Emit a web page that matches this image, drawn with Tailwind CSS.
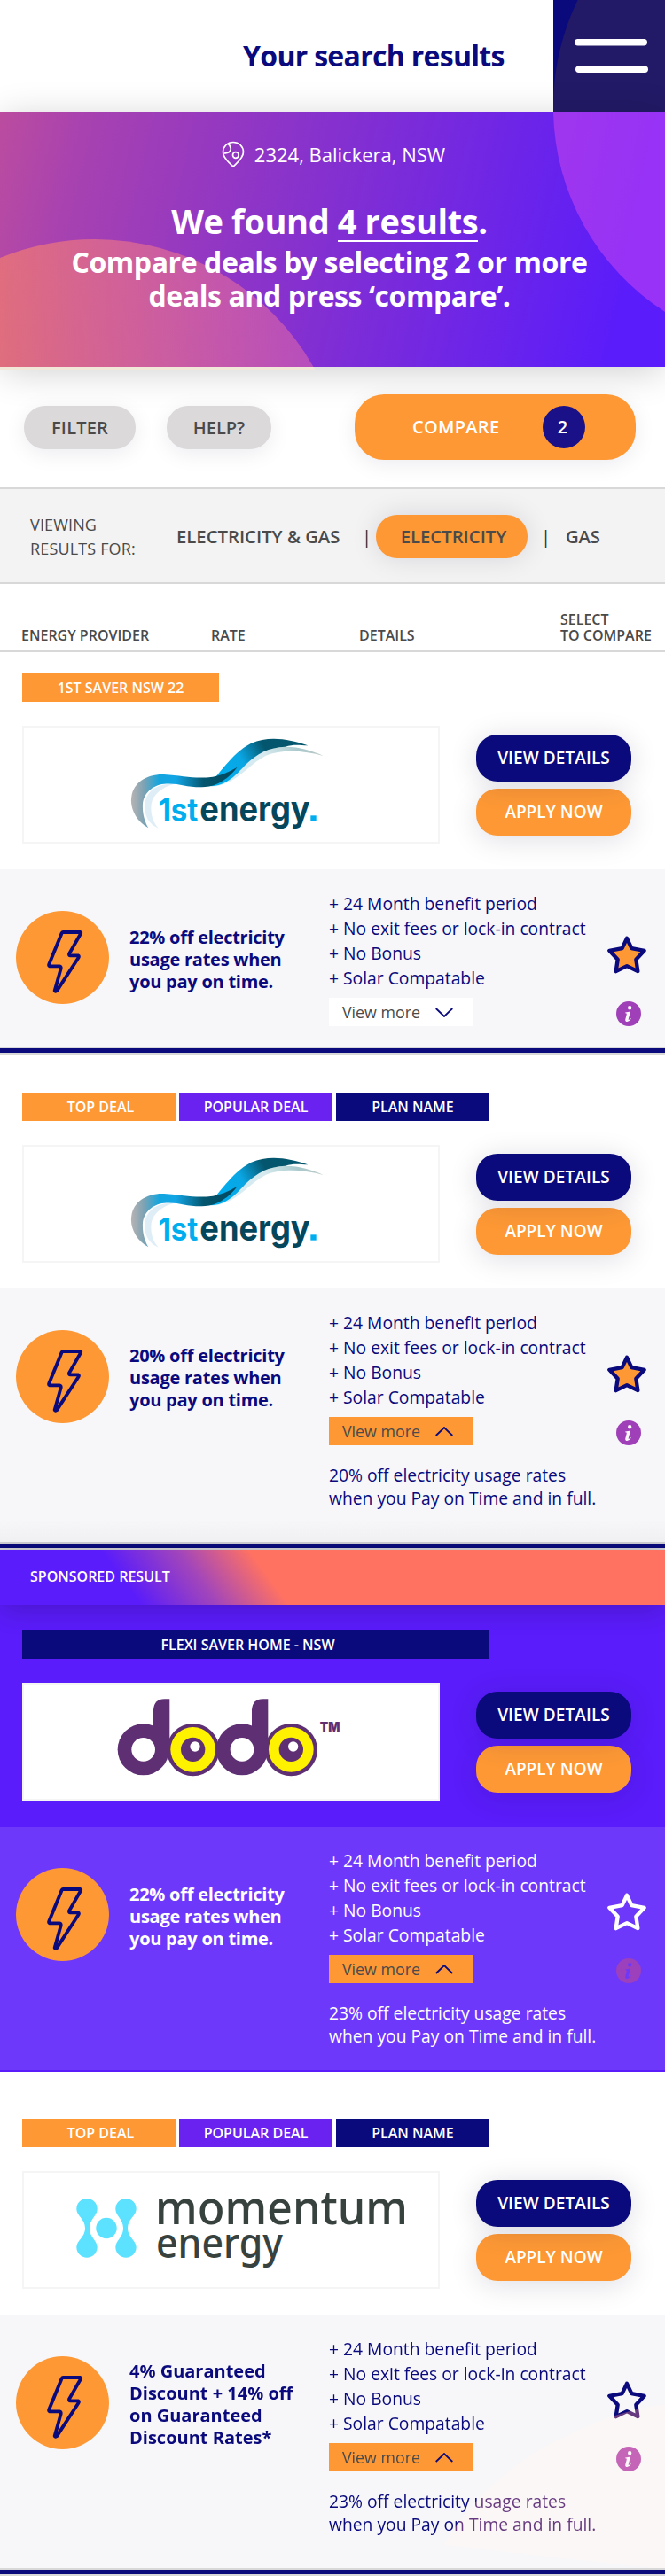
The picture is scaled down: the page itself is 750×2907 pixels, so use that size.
<!DOCTYPE html>
<html lang="en">
<head>
<meta charset="utf-8">
<title>Your search results</title>
<script src="https://cdn.jsdelivr.net/npm/@tailwindcss/browser@4"></script>
</head>
<body class="bg-white">
<svg class="absolute" width="0" height="0">
  <defs>
    <linearGradient id="swA" gradientUnits="userSpaceOnUse" x1="52" y1="0" x2="415" y2="0">
      <stop offset="0" stop-color="#b9b4b4"/><stop offset=".12" stop-color="#7fa3b3"/><stop offset=".27" stop-color="#12a5df"/><stop offset=".42" stop-color="#12a5e6"/><stop offset=".68" stop-color="#04566e"/><stop offset="1" stop-color="#04465c"/>
    </linearGradient>
    <linearGradient id="swB" gradientUnits="userSpaceOnUse" x1="340" y1="160" x2="560" y2="40">
      <stop offset="0" stop-color="#00aeef"/><stop offset=".4" stop-color="#0aa6e4"/><stop offset=".75" stop-color="#04566e"/><stop offset="1" stop-color="#04566e"/>
    </linearGradient>
    <linearGradient id="swC" gradientUnits="userSpaceOnUse" x1="340" y1="190" x2="700" y2="90">
      <stop offset="0" stop-color="#d9eff9"/><stop offset=".5" stop-color="#d5e9ee"/><stop offset=".8" stop-color="#a9c9cc"/><stop offset="1" stop-color="#bcc9c6"/>
    </linearGradient>
    <linearGradient id="heroBlob" gradientUnits="userSpaceOnUse" x1="0" y1="400" x2="350" y2="340">
      <stop offset="0" stop-color="#ff8860" stop-opacity=".6"/><stop offset="1" stop-color="#ff78a0" stop-opacity=".42"/>
    </linearGradient>
  </defs>
  <symbol id="bolt" viewBox="54 84 315 315">
    <path d="M213 156H272Q275 158 272 163L234 229Q233 235 238 235H264Q269 237 265 243L192 355Q188 358 185 354L206 279Q207 272 201 271H168Q164 269 166 264L209 159Q211 156 213 156Z" fill="none" stroke="#0a0a7d" stroke-width="11.5" stroke-linejoin="round"/>
  </symbol>
  <symbol id="star" viewBox="0 0 132 128">
    <path d="M66 8L82 42L125 50L97 80L103 120L66 102L29 120L35 80L7 50L50 42Z" stroke-width="13" stroke-linejoin="round"/>
  </symbol>
  <symbol id="info" viewBox="0 0 28 28">
    <path fill-rule="evenodd" d="M14 0A14 14 0 1 1 14 28A14 14 0 1 1 14 0ZM15.200 5A2.200 2.200 0 1 0 15.200 9.400A2.200 2.200 0 1 0 15.200 5ZM10.300 12.400L10.100 13.200Q12 13.100 11.800 14.400L10.300 20.200Q9.800 23 12.300 23Q15 22.800 16.800 19.500L16.100 19.100Q14.700 21 14 20.900Q13.500 20.800 13.800 19.700L16 11.500Q13 12.300 10.300 12.400Z"/>
  </symbol>
  <symbol id="first" viewBox="0 0 750 360">
    <path d="M146 344C108 330 92 285 102 250C112 212 150 192 200 194C160 204 128 228 122 262C118 296 128 325 146 344Z" fill="#dfeef6"/>
    <path d="M320 204C390 190 430 120 490 90C560 52 640 70 704 99C640 80 560 76 510 98C450 126 410 200 320 204Z" fill="url(#swC)"/>
    <path d="M340 170C380 122 410 82 460 56C520 30 590 42 652 64C620 62 600 60 575 68C520 70 480 90 440 130C400 174 370 204 310 202Z" fill="url(#swB)"/>
    <path d="M112 343C70 320 48 275 55 236C62 190 105 160 165 162C230 166 270 178 330 170C365 164 390 150 413 137C380 180 340 206 290 205C235 205 215 190 165 194C125 198 96 226 93 262C91 295 100 322 112 343Z" fill="url(#swA)"/>
    <text x="146" y="320" font-family="Inter, sans-serif" font-weight="700" font-size="106" textLength="134" lengthAdjust="spacingAndGlyphs" fill="#00aeef">1st</text>
    <text x="286" y="320" font-family="Inter, sans-serif" font-weight="700" font-size="118" textLength="373" lengthAdjust="spacingAndGlyphs" fill="#04465c">energy</text>
    <rect x="661" y="301" width="19" height="19" fill="#00aeef"/>
  </symbol>
</svg>

<div class="w-[750px] h-[2907px] relative overflow-hidden bg-white font-['Open_Sans',sans-serif] whitespace-nowrap">

  <!-- Header -->
  <header class="h-[126px] flex justify-between bg-white">
    <h1 class="flex-1 pl-[274px] pt-[43px] leading-[40px] text-[32px] font-bold tracking-[-0.7px] text-[#0a0a7d]">Your search results</h1>
    <button class="relative overflow-hidden w-[126px] h-[126px] bg-[#0a0a7d]">
      <svg class="block" width="126" height="126" viewBox="0 0 126 126">
        <circle cx="275" cy="120" r="275" fill="#221a66"/>
        <rect x="24" y="44" width="82" height="7.500" rx="3.700" fill="#fff"/>
        <rect x="25" y="74.500" width="82" height="7.500" rx="3.700" fill="#fff"/>
      </svg>
    </button>
  </header>

  <!-- Hero -->
  <section class="relative z-10 h-[288px] bg-[linear-gradient(103deg,#bb4c9f_0%,#a842b0_12%,#822fd2_50%,#5a1cfa_92%)] shadow-[0_6px_40px_-2px_rgba(0,0,0,0.2)]">
    <svg class="absolute left-0 top-0" width="750" height="292" viewBox="0 126 750 292">
      <path d="M0 414H353.500L356 418H0Z" fill="#f1e8da"/>
      <path d="M0 291A285 285 0 0 1 107 270A285 285 0 0 1 353.500 414H0Z" fill="url(#heroBlob)"/>
      <path d="M624 126A275 275 0 0 0 750 352V126Z" fill="#e850f0" fill-opacity=".43"/>
    </svg>
    <div class="relative pt-[32px] pr-[7px] text-white text-center">
      <div class="flex justify-center items-center gap-[11px] h-[32px] pl-[9px]">
        <svg width="26" height="30" viewBox="0 0 26 30" fill="none" stroke="#fff" stroke-width="1.700" stroke-linejoin="round"><path d="M13 1.500C6.500 1.500 1.500 6.500 1.500 12.500C1.500 19.500 9 25 13 29C17 25 24.500 19.500 24.500 12.500C24.500 6.500 19.500 1.500 13 1.500Z"/><circle cx="15.800" cy="16" r="3.300"/><path d="M7.500 3.500C11.500 7 12 14 2.500 14"/></svg>
        <span class="text-[22px] leading-[32px]">2324, Balickera, NSW</span>
      </div>
      <div class="mt-[34px] h-[50px] leading-[50px] text-[38px] font-bold tracking-[-0.4px]">We found <span class="inline-block h-[49px] border-b-2 border-white leading-[50px]">4 results</span>.</div>
      <p class="mt-[3px] text-[32px] leading-[38px] font-bold tracking-[-0.42px]">Compare deals by selecting 2 or more<br>deals and press ‘compare’.</p>
    </div>
  </section>

  <!-- Actions -->
  <section class="h-[136px] flex items-start px-[27px] text-[20px] font-[570] text-[#4a4a4a]">
    <button class="mt-[44px] w-[126px] h-[49px] rounded-[24px] bg-[#dbd9da] tracking-[0.2px] shadow-[0_5px_25px_rgba(10,10,60,0.08)]">FILTER</button>
    <button class="mt-[44px] ml-[35px] w-[118px] h-[49px] rounded-[24px] bg-[#dbd9da] shadow-[0_5px_25px_rgba(10,10,60,0.08)]">HELP?</button>
    <button class="relative z-20 mt-[31px] ml-[94px] w-[317px] h-[74px] rounded-[33px] bg-[#fd9835] text-white flex items-center pl-[65px] shadow-[0_5px_25px_rgba(10,10,60,0.08)]">
      <span class="w-[98px] text-left tracking-[0.3px]">COMPARE</span>
      <span class="ml-[49px] size-[48px] rounded-full bg-[#1a1188] flex items-center justify-center pr-[3px]">2</span>
    </button>
  </section>

  <!-- Fuel type -->
  <nav class="h-[109px] border-y-2 border-[#d8d8d8] bg-[#f3f3f3] flex items-center pl-[34px] text-[#4a4a4a]">
    <div class="text-[18px] leading-[27px] w-[165px] pt-[2px] font-[450] tracking-[0.15px]">VIEWING<br>RESULTS FOR:</div>
    <div class="flex items-center text-[20.300px] font-[570] pt-[1px]">
      <span class="w-[212px]">ELECTRICITY &amp; GAS</span>
      <span class="w-[3px] text-[#333] font-normal -translate-x-[3px]">|</span>
      <span class="ml-[10px] w-[171px] h-[49px] rounded-[24px] bg-[#fd9835] flex items-center justify-center pl-[4px] shadow-[0_0_30px_rgba(10,10,60,0.12)]">ELECTRICITY</span>
      <span class="ml-[15px] w-[28px] text-[#333] font-normal">|</span>
      <span class="tracking-[-0.2px]">GAS</span>
    </div>
  </nav>

  <div class="h-[77px] border-b-2 border-[#d8d8d8] flex items-end pl-[24px] pb-[8px] text-[16px] leading-[18px] font-[550] text-[#4a4a4a]">
    <span class="w-[214px]">ENERGY PROVIDER</span>
    <span class="w-[167px]">RATE</span>
    <span class="w-[227px]">DETAILS</span>
    <span>SELECT<br>TO COMPARE</span>
  </div>

  <!-- Result 1 -->
  <article>
    <div class="h-[245px] pt-[24px] pl-[25px]">
      <div class="flex text-[16px] leading-[32px] font-semibold text-white text-center"><span class="w-[222px] h-[32px] bg-[#fd9835]">1ST SAVER NSW 22</span></div>
      <div class="mt-[27px] flex">
        <div class="w-[471px] h-[133px] border-2 border-[#f5f5f5] bg-white"><svg class="ml-[103px] mt-[-1px]" width="250" height="120"><use href="#first"/></svg></div>
        <div class="ml-[41px] pt-[10px] w-[175px] flex flex-col gap-[8px] text-[19px] font-semibold text-white">
          <button class="relative h-[53px] rounded-[24px] bg-[#0a0a7d] tracking-[0.1px] shadow-[0_4px_32px_rgba(10,10,60,0.14)] z-[1]">VIEW DETAILS</button>
          <button class="h-[53px] rounded-[24px] bg-[#fd9835] shadow-[0_6px_32px_rgba(10,10,60,0.12)]">APPLY NOW</button>
        </div>
      </div>
    </div>
    <div class="relative z-[2] h-[200px] bg-[#f7f7fa] flex items-start pl-[18px] text-[20px] text-[#0a0a7d]">
      <svg class="mt-[47px] rounded-full bg-[#fd9835]" width="105" height="105"><use href="#bolt"/></svg>
      <p class="ml-[23px] w-[225px] pt-[64px] leading-[25px] font-bold tracking-[-0.25px]">22% off electricity<br>usage rates when<br>you pay on time.</p>
      <div class="w-[314px] pt-[25px] text-[19.300px]">
        <ul class="leading-[28px]"><li>+ 24 Month benefit period</li><li>+ No exit fees or lock-in contract</li><li>+ No Bonus</li><li>+ Solar Compatable</li></ul>
        <button class="mt-[8px] w-[163px] h-[32px] pl-[15px] bg-white flex items-center gap-[17px] text-[17.800px] leading-[30px] text-[#4a4a4a]">View more<svg width="20" height="11" viewBox="0 0 20 11" fill="none" stroke="#0a0a7d" stroke-width="1.800"><path d="M.7 1L10 10L19.300 1"/></svg></button>
      </div>
      <div class="pt-[75px] w-[44px]">
        <svg class="fill-[#fd9835] stroke-[#0a0a7d]" width="44" height="43"><use href="#star"/></svg>
        <svg class="ml-[10px] mt-[31px] fill-[#a040b8]" width="28" height="28"><use href="#info"/></svg>
      </div>
    </div>
    <div class="h-[9px] border-y-2 border-[#d8d8d8] bg-[#0a0a7d]"></div>
  </article>

  <!-- Result 2 -->
  <article>
    <div class="h-[264px] pt-[43px] pl-[25px]">
      <div class="flex gap-[4px] text-[16px] leading-[32px] font-semibold text-white text-center"><span class="w-[173px] h-[32px] pl-[4px] bg-[#fd9835]">TOP DEAL</span><span class="w-[173px] bg-[#6a22f0]">POPULAR DEAL</span><span class="w-[173px] bg-[#0a0a7d]">PLAN NAME</span></div>
      <div class="mt-[27px] flex">
        <div class="w-[471px] h-[133px] border-2 border-[#f5f5f5] bg-white"><svg class="ml-[103px] mt-[-1px]" width="250" height="120"><use href="#first"/></svg></div>
        <div class="ml-[41px] pt-[10px] w-[175px] flex flex-col gap-[8px] text-[19px] font-semibold text-white">
          <button class="relative h-[53px] rounded-[24px] bg-[#0a0a7d] tracking-[0.1px] shadow-[0_4px_32px_rgba(10,10,60,0.14)] z-[1]">VIEW DETAILS</button>
          <button class="h-[53px] rounded-[24px] bg-[#fd9835] shadow-[0_6px_32px_rgba(10,10,60,0.12)]">APPLY NOW</button>
        </div>
      </div>
    </div>
    <div class="relative z-[2] h-[286px] bg-[linear-gradient(#f7f7fa_260px,#f0f0f2_286px)] flex items-start pl-[18px] text-[20px] text-[#0a0a7d]">
      <svg class="mt-[47px] rounded-full bg-[#fd9835]" width="105" height="105"><use href="#bolt"/></svg>
      <p class="ml-[23px] w-[225px] pt-[63px] leading-[25px] font-bold tracking-[-0.25px]">20% off electricity<br>usage rates when<br>you pay on time.</p>
      <div class="w-[314px] pt-[25px] text-[19.300px]">
        <ul class="leading-[28px]"><li>+ 24 Month benefit period</li><li>+ No exit fees or lock-in contract</li><li>+ No Bonus</li><li>+ Solar Compatable</li></ul>
        <button class="mt-[8px] w-[163px] h-[32px] pl-[15px] bg-[#fd9835] flex items-center gap-[17px] text-[17.800px] leading-[30px] text-[#4a4a4a]">View more<svg width="20" height="11" viewBox="0 0 20 11" fill="none" stroke="#0a0a7d" stroke-width="1.800"><path d="M.7 10L10 1L19.300 10"/></svg></button>
        <p class="mt-[21px] leading-[26px]">20% off electricity usage rates<br>when you Pay on Time and in full.</p>
      </div>
      <div class="pt-[75px] w-[44px]">
        <svg class="fill-[#fd9835] stroke-[#0a0a7d]" width="44" height="43"><use href="#star"/></svg>
        <svg class="ml-[10px] mt-[31px] fill-[#a040b8]" width="28" height="28"><use href="#info"/></svg>
      </div>
    </div>
    <div class="h-[9px] border-y-2 border-[#d0d0d4] bg-[#0a0a7d]"></div>
  </article>

  <!-- Sponsored result -->
  <article class="bg-[#5a1cfa]">
    <div class="relative z-[1] h-[62px] pl-[34px] pt-[14px] text-[16px] leading-[32px] font-semibold text-white bg-[linear-gradient(54deg,#5a1cfa_20%,#a346ba_31%,#ff7262_41%)] shadow-[0_6px_30px_-2px_rgba(0,0,0,0.22)]">SPONSORED RESULT</div>
    <div class="h-[251px] pt-[29px] pl-[25px]">
      <div class="relative z-[1] flex text-[16px] leading-[32px] font-semibold text-white text-center"><span class="w-[527px] h-[32px] pr-[18px] bg-[#0a0a7d]">FLEXI SAVER HOME - NSW</span></div>
      <div class="mt-[27px] flex">
        <div class="w-[471px] h-[133px] border-2 border-[#f5f5f5] bg-white">
          <svg class="ml-[93px] mt-[-1px]" width="280" height="120" viewBox="0 0 840 360">
            <g fill="#5e3073">
              <path d="M159 150V88Q162 52 196 52H214V223H159Z"/><path d="M492 150V88Q495 52 529 52H547V223H492Z"/>
              <circle cx="125" cy="223" r="87"/><circle cx="459" cy="223" r="87"/><circle cx="293" cy="224" r="89"/><circle cx="625" cy="224" r="89"/>
            </g>
            <g fill="#fff200"><circle cx="293" cy="223" r="76"/><circle cx="625" cy="223" r="76"/></g>
            <g fill="#5e3073"><circle cx="293" cy="223" r="41"/><circle cx="625" cy="223" r="41"/></g>
            <g fill="#fff"><circle cx="125" cy="223" r="40"/><circle cx="459" cy="223" r="40"/><circle cx="300" cy="213" r="17"/><circle cx="632" cy="213" r="17"/></g>
            <text x="722" y="163" font-family="Inter, sans-serif" font-weight="900" font-size="42" textLength="68" lengthAdjust="spacingAndGlyphs" fill="#5e3073">TM</text>
          </svg>
        </div>
        <div class="ml-[41px] pt-[10px] w-[175px] flex flex-col gap-[8px] text-[19px] font-semibold text-white">
          <button class="relative h-[53px] rounded-[24px] bg-[#0a0a7d] tracking-[0.1px] shadow-[0_4px_32px_rgba(10,10,60,0.14)] z-[1]">VIEW DETAILS</button>
          <button class="h-[53px] rounded-[24px] bg-[#fd9835] shadow-[0_6px_32px_rgba(10,10,60,0.12)]">APPLY NOW</button>
        </div>
      </div>
    </div>
    <div class="relative z-[2] h-[274px] bg-[#6e38fb] flex items-start pl-[18px] text-[20px] text-white">
      <svg class="mt-[46px] rounded-full bg-[#fd9835]" width="105" height="105"><use href="#bolt"/></svg>
      <p class="ml-[23px] w-[225px] pt-[63px] leading-[25px] font-bold tracking-[-0.25px]">22% off electricity<br>usage rates when<br>you pay on time.</p>
      <div class="w-[314px] pt-[24px] text-[19.300px]">
        <ul class="leading-[28px]"><li>+ 24 Month benefit period</li><li>+ No exit fees or lock-in contract</li><li>+ No Bonus</li><li>+ Solar Compatable</li></ul>
        <button class="mt-[8px] w-[163px] h-[32px] pl-[15px] bg-[#fd9835] flex items-center gap-[17px] text-[17.800px] leading-[30px] text-[#4a4a4a]">View more<svg width="20" height="11" viewBox="0 0 20 11" fill="none" stroke="#0a0a7d" stroke-width="1.800"><path d="M.7 10L10 1L19.300 10"/></svg></button>
        <p class="mt-[21px] leading-[26px]">23% off electricity usage rates<br>when you Pay on Time and in full.</p>
      </div>
      <div class="pt-[74px] w-[44px]">
        <svg class="fill-none stroke-white" width="44" height="43"><use href="#star"/></svg>
        <svg class="ml-[10px] mt-[31px] fill-[#9c40bc]" width="28" height="28"><use href="#info"/></svg>
      </div>
    </div>
    <div class="h-[2px]"></div>
  </article>

  <!-- Result 4 -->
  <article>
    <div class="h-[274px] pt-[53px] pl-[25px]">
      <div class="flex gap-[4px] text-[16px] leading-[32px] font-semibold text-white text-center"><span class="w-[173px] h-[32px] pl-[4px] bg-[#fd9835]">TOP DEAL</span><span class="w-[173px] bg-[#6a22f0]">POPULAR DEAL</span><span class="w-[173px] bg-[#0a0a7d]">PLAN NAME</span></div>
      <div class="mt-[27px] flex">
        <div class="w-[471px] h-[133px] border-2 border-[#f5f5f5] bg-white">
          <svg width="467" height="129" viewBox="27 2452 467 129">
            <g fill="#5ce1ff">
              <path id="db" d="M98 2481A11.700 11.700 0 0 1 109.700 2493C109.500 2501 101 2504 101 2514.500C101 2525 109.500 2528 109.700 2536A11.700 11.700 0 1 1 86.300 2536C86.500 2528 96 2525 96 2514.500C96 2504 86.500 2501 86.300 2493A11.700 11.700 0 0 1 98 2481Z"/>
              <use href="#db" transform="translate(240 0) scale(-1 1)"/>
              <circle cx="120" cy="2514.500" r="11.700"/>
            </g>
            <g font-family="Noto Sans, sans-serif" font-weight="500" fill="#37423f">
              <text x="175" y="2510" font-size="53" textLength="285" lengthAdjust="spacingAndGlyphs">momentum</text>
              <text x="176" y="2547.500" font-size="47" textLength="143" lengthAdjust="spacingAndGlyphs">energy</text>
            </g>
          </svg>
        </div>
        <div class="ml-[41px] pt-[10px] w-[175px] flex flex-col gap-[8px] text-[19px] font-semibold text-white">
          <button class="relative h-[53px] rounded-[24px] bg-[#0a0a7d] tracking-[0.1px] shadow-[0_4px_32px_rgba(10,10,60,0.14)] z-[1]">VIEW DETAILS</button>
          <button class="h-[53px] rounded-[24px] bg-[#fd9835] shadow-[0_6px_32px_rgba(10,10,60,0.12)]">APPLY NOW</button>
        </div>
      </div>
    </div>
    <div class="relative z-[2] h-[286px] bg-[#f7f7fa] flex items-start pl-[18px] text-[20px] text-[#0a0a7d]">
      <svg class="mt-[47px] rounded-full bg-[#fd9835]" width="105" height="105"><use href="#bolt"/></svg>
      <p class="ml-[23px] w-[225px] pt-[51px] leading-[25px] font-bold">4% Guaranteed<br>Discount + 14% off<br>on Guaranteed<br>Discount Rates*</p>
      <div class="w-[314px] pt-[25px] text-[19.300px]">
        <ul class="leading-[28px]"><li>+ 24 Month benefit period</li><li>+ No exit fees or lock-in contract</li><li>+ No Bonus</li><li>+ Solar Compatable</li></ul>
        <button class="mt-[8px] w-[163px] h-[32px] pl-[15px] bg-[#fd9835] flex items-center gap-[17px] text-[17.800px] leading-[30px] text-[#4a4a4a]">View more<svg width="20" height="11" viewBox="0 0 20 11" fill="none" stroke="#0a0a7d" stroke-width="1.800"><path d="M.7 10L10 1L19.300 10"/></svg></button>
        <p class="mt-[21px] leading-[26px]">23% off electricity usage rates<br>when you Pay on Time and in full.</p>
      </div>
      <div class="pt-[75px] w-[44px]">
        <svg class="fill-none stroke-[#0a0a7d]" width="44" height="43"><use href="#star"/></svg>
        <svg class="ml-[10px] mt-[31px] fill-[#a040b8]" width="28" height="28"><use href="#info"/></svg>
      </div>
      <!-- decorative blob tinting the corner -->
      <svg class="absolute right-0 bottom-0 mix-blend-screen" width="260" height="200" viewBox="490 2698 260 200"><path d="M500 2872C530 2825 570 2780 640 2748C680 2728 715 2718 750 2713V2898H735Z" fill="#582800"/></svg>
      <svg class="absolute right-0 bottom-0" width="260" height="200" viewBox="490 2698 260 200"><path d="M500 2872C530 2825 570 2780 640 2748C680 2728 715 2718 750 2713V2898H735Z" fill="#ffe8b0" fill-opacity=".05"/></svg>
    </div>
    <div class="h-[9px] border-y-2 border-[#d8d8d8] bg-[#0a0a7d]"></div>
  </article>
</div>
</body>
</html>
